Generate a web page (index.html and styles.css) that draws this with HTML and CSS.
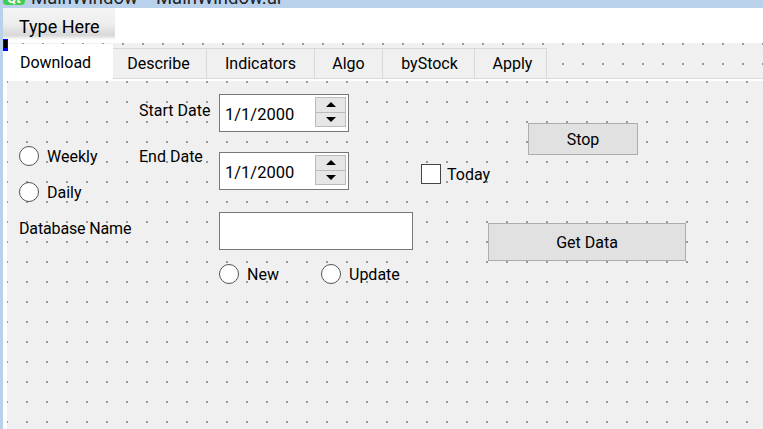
FILE: index.html
```html
<!DOCTYPE html>
<html>
<head>
    <title>MainWindow - MainWindow.ui</title>
    <link rel="stylesheet" href="styles.css">
</head>
<body>
    <div class="titlebar">
        <span class="qt-badge">Qt</span>
        <span class="title">MainWindow</span>
        <span class="title">MainWindow.ui</span>
    </div>
    <div class="window">
        <div class="menubar">
            <div class="menu-item">Type Here</div>
        </div>
        <span class="handle"></span>
        <div class="canvas">
            <div class="tabbar">
                <div class="tab active">Download</div>
                <div class="tab tab-describe">Describe</div>
                <div class="tab tab-indicators">Indicators</div>
                <div class="tab tab-algo">Algo</div>
                <div class="tab tab-bystock">byStock</div>
                <div class="tab tab-apply">Apply</div>
            </div>
            <div class="form">
                <div class="col-left">
                    <label class="radio"><span class="circle"></span>Weekly</label>
                    <label class="radio"><span class="circle"></span>Daily</label>
                    <div class="db-label">Database Name</div>
                </div>
                <div class="col-labels">
                    <div class="start-label">Start Date</div>
                    <div class="end-label">End Date</div>
                </div>
                <div class="col-fields">
                    <div class="spin first">
                        <span class="spin-value">1/1/2000</span>
                        <span class="spin-buttons">
                            <span class="spin-btn"><span class="arrow-up"></span></span>
                            <span class="spin-btn"><span class="arrow-down"></span></span>
                        </span>
                    </div>
                    <div class="spin second">
                        <span class="spin-value">1/1/2000</span>
                        <span class="spin-buttons">
                            <span class="spin-btn"><span class="arrow-up"></span></span>
                            <span class="spin-btn"><span class="arrow-down"></span></span>
                        </span>
                    </div>
                    <div class="line-edit"></div>
                    <div class="radio-row">
                        <label class="radio radio-new"><span class="circle"></span>New</label>
                        <label class="radio"><span class="circle"></span>Update</label>
                    </div>
                </div>
                <div class="col-today">
                    <label class="check"><span class="box"></span>Today</label>
                </div>
                <div class="col-buttons">
                    <div class="button stop">Stop</div>
                    <div class="button get-data">Get Data</div>
                </div>
            </div>
        </div>
    </div>
</body>
</html>
```

FILE: styles.css
```css
html, body {
    margin: 0;
    height: 429px;
    overflow: hidden;
}

body {
    background: #b9d1ea;
    font: 16px/20px Roboto, "Open Sans", sans-serif;
    color: #000;
}

/* title bar, only its lower edge is on screen */
.titlebar {
    display: flex;
    align-items: flex-end;
    height: 8px;
    overflow: hidden;
    padding-left: 3px;
    color: #222;
}

.qt-badge {
    flex: none;
    width: 22px;
    height: 20px;
    margin-right: 6px;
    line-height: 28px;
    border-radius: 4px;
    background: #41cd52;
    color: #fff;
    font-size: 13px;
    font-weight: bold;
    text-align: center;
    transform: translateY(-3px);
}

.title {
    flex: none;
    margin-right: 18px;
    font-size: 18.5px;
    line-height: 24px;
    transform: translateY(2px);
}

.window {
    position: relative;
    height: 421px;
    margin-left: 3px;
    background: #fff;
}

.menubar {
    height: 35px;
}

.menu-item {
    box-sizing: border-box;
    width: 112px;
    height: 32px;
    padding-left: 16px;
    font-size: 18px;
    line-height: 37px;
    background: linear-gradient(#f4f4f4, #eee 50%, #d8d8d8 85%, #fff);
}

.handle {
    position: absolute;
    left: 0;
    top: 31px;
    width: 3px;
    height: 8px;
    border: 1px solid #00f;
    border-bottom-width: 3px;
    background: #000;
}

.canvas {
    display: flex;
    flex-direction: column;
    height: 386px;
    margin-left: 4px;
    background-color: #f0f0f0;
    background-image: conic-gradient(at 2px 2px, transparent 75%, #999 0);
    background-size: 20px 20px;
    background-position: 15px 0;
}

.tabbar {
    flex: none;
    display: flex;
    align-items: flex-start;
    height: 35px;
    margin: 0 0 2px -2px;
    border-bottom: 1px solid #d9d9d9;
    box-shadow: 0 2px 0 #fff;
}

.tab {
    box-sizing: border-box;
    height: 30px;
    margin-top: 5px;
    border: 1px solid #d9d9d9;
    border-left: 0;
    border-bottom: 0;
    background: #f0f0f0;
    text-align: center;
    line-height: 29px;
}

.tab.active {
    width: 108px;
    height: 36px;
    margin-top: 1px;
    padding-right: 7px;
    border: 0;
    background: #fff;
    line-height: 37px;
}

.tab-describe { width: 94px; padding-right: 2px; }
.tab-indicators { width: 108px; }
.tab-algo { width: 68px; }
.tab-bystock { width: 92px; padding-left: 2px; }
.tab-apply { width: 72px; padding-left: 4px; }

.form {
    flex: 1;
    display: flex;
    padding-left: 12px;
    background-color: #f0f0f0;
    background-image: conic-gradient(at 2px 2px, transparent 75%, #999 0);
    background-size: 20px 20px;
    background-position: -1px 0;
}

.radio,
.check {
    display: flex;
    align-items: flex-start;
    height: 20px;
    line-height: 22px;
}

.circle {
    flex: none;
    box-sizing: border-box;
    width: 20px;
    height: 20px;
    margin-right: 8px;
    border: 1px solid #555;
    border-radius: 50%;
    background: #fff;
}

.col-left {
    width: 120px;
    padding-top: 65px;
}

.col-left .radio {
    margin-bottom: 16px;
}

.db-label {
    padding-top: 1px;
    letter-spacing: -0.15px;
    white-space: nowrap;
}

.col-labels {
    width: 80px;
}

.start-label {
    margin-top: 20px;
}

.end-label {
    margin-top: 26px;
}

.col-fields {
    width: 202px;
}

.spin {
    box-sizing: border-box;
    display: flex;
    justify-content: space-between;
    width: 130px;
    height: 38px;
    padding: 2px 2px 0 5px;
    border: 1px solid #777;
    background: #fff;
}

.spin.first {
    margin-top: 13px;
}

.spin.second {
    margin-top: 20px;
}

.spin-value {
    font-size: 16.5px;
    line-height: 36px;
}

.spin-buttons {
    box-sizing: border-box;
    display: flex;
    flex-direction: column;
    width: 31px;
    height: 30px;
    border: 1px solid #bbb;
}

.spin-btn {
    flex: 1;
    display: flex;
    align-items: center;
    justify-content: center;
    background: #e6e6e6;
}

.spin-btn + .spin-btn {
    border-top: 1px solid #bbb;
}

.arrow-up {
    border: 5px solid transparent;
    border-top: 0;
    border-bottom-color: #000;
}

.arrow-down {
    border: 5px solid transparent;
    border-bottom: 0;
    border-top-color: #000;
}

.line-edit {
    box-sizing: border-box;
    width: 194px;
    height: 38px;
    margin-top: 22px;
    border: 1px solid #777;
    background: #fff;
}

.radio-row {
    display: flex;
    margin-top: 14px;
}

.radio-new {
    width: 102px;
}

.col-today {
    width: 67px;
    padding-top: 83px;
}

.box {
    flex: none;
    box-sizing: border-box;
    width: 20px;
    height: 20px;
    margin-right: 6px;
    border: 1px solid #444;
    background: #fff;
}

.button {
    box-sizing: border-box;
    border: 1px solid #adadad;
    background: #e1e1e1;
    text-align: center;
}

.stop {
    width: 110px;
    height: 32px;
    margin-top: 42px;
    margin-left: 40px;
    line-height: 32px;
}

.get-data {
    width: 198px;
    height: 38px;
    margin-top: 68px;
    line-height: 38px;
}
```
